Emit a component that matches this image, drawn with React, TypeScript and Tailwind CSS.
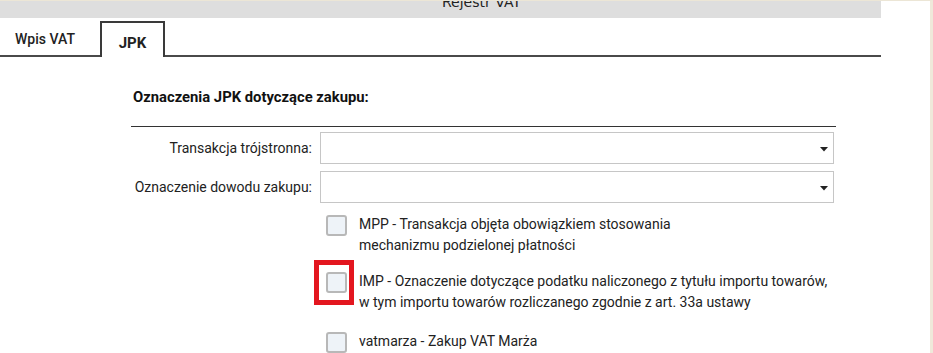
import React from 'react';

function Caret() {
  return (
    <svg width="8" height="5" viewBox="0 0 8 5" className="absolute right-[5px] top-[14px]">
      <path d="M0 0 H8 L4 4.5 Z" fill="#222" />
    </svg>
  );
}

function SelectRow({ label }: { label: string }) {
  return (
    <div className="flex items-center">
      <div className="w-[313px] pr-[1px] text-right text-[14px] text-[#222]">{label}</div>
      <div className="ml-[7px] relative w-[514px] h-[32px] border border-[#c6c6c6] bg-white">
        <Caret />
      </div>
    </div>
  );
}

function CheckRow({ lines, marked, className }: { lines: string[]; marked?: boolean; className?: string }) {
  return (
    <div className={`flex items-start ${className ?? ''}`}>
      <div className="relative ml-[326px] mt-[1px] w-[21px] h-[21px] rounded-[3px] border-2 border-[#b8b8b8] bg-[#eef3f8] shrink-0">
        {marked && (
          <div className="absolute left-[-14px] top-[-14px] w-[40px] h-[45px] border-[5px] border-[#e3161f]" />
        )}
      </div>
      <div className="ml-[12px] text-[14px] leading-[21px] text-[#222]">
        {lines.map(l => (
          <div key={l}>{l}</div>
        ))}
      </div>
    </div>
  );
}

export default function App() {
  return (
    <div className="w-[933px] h-[353px] overflow-hidden bg-white flex font-['Roboto',sans-serif]">
      <div className="w-[881px] flex flex-col">
        {/* window title strip, cut off at the top */}
        <div className="h-[18px] bg-[#dedede] border-t border-[#ece6d6] overflow-hidden">
          <div className="pl-[442px] -mt-[9px] text-[14px] text-[#222]" style={{ fontFamily: 'Verdana, "DejaVu Sans", sans-serif' }}>
            Rejestr VAT
          </div>
        </div>

        {/* tabs */}
        <div className="h-[39px] flex items-end border-b-2 border-[#4a4a4a]">
          <div className="w-[100px] h-[34px] pl-[15px] pt-[8px] text-[14px] font-medium text-[#222]">Wpis VAT</div>
          <div className="w-[65px] h-[36px] -mb-[2px] bg-white border-2 border-b-0 border-[#3a3a3a] text-center pt-[9px] text-[15px] font-bold text-[#222]">
            JPK
          </div>
        </div>

        {/* content */}
        <div className="pt-[30px]">
          <div className="pl-[133px] text-[14.8px] leading-[20px] font-bold text-[#111]">Oznaczenia JPK dotyczące zakupu:</div>
          <div className="ml-[131px] mt-[19px] w-[705px] h-[1.5px] bg-[#333]" />
          <div className="mt-[5px] flex flex-col gap-[7px]">
            <SelectRow label="Transakcja trójstronna:" />
            <SelectRow label="Oznaczenie dowodu zakupu:" />
          </div>
          <CheckRow
            className="mt-[11px]"
            lines={['MPP - Transakcja objęta obowiązkiem stosowania', 'mechanizmu podzielonej płatności']}
          />
          <CheckRow
            className="mt-[15px]"
            marked
            lines={[
              'IMP - Oznaczenie dotyczące podatku naliczonego z tytułu importu towarów,',
              'w tym importu towarów rozliczanego zgodnie z art. 33a ustawy',
            ]}
          />
          <CheckRow className="mt-[18px]" lines={['vatmarza - Zakup VAT Marża']} />
        </div>
      </div>
      <div className="flex-1 border-t border-[#ece6d6] border-r-[3px] border-r-[#efe9da]" />
    </div>
  );
}
